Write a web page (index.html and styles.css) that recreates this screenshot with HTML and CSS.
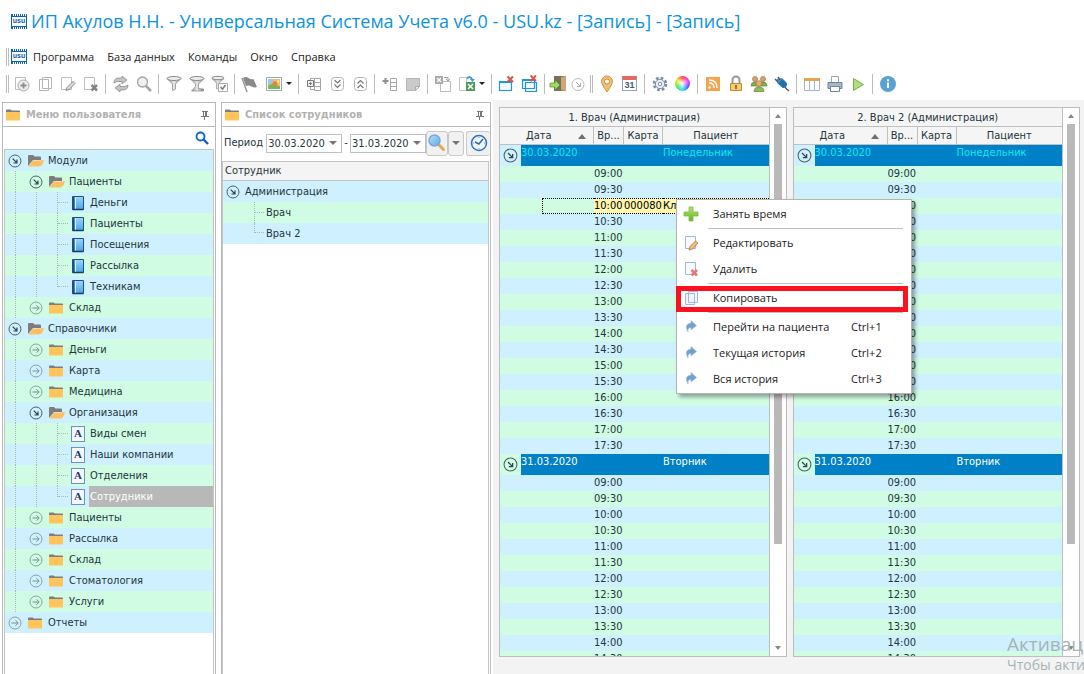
FILE: index.html
```html
<!DOCTYPE html>
<html lang="ru">
<head>
<meta charset="utf-8">
<title>ИП Акулов Н.Н. - Универсальная Система Учета</title>
<link rel="stylesheet" href="styles.css">
</head>
<body>
<svg class="defs" aria-hidden="true">
  <defs>
    <linearGradient id="g-blue" x1="0" y1="0" x2="1" y2="1"><stop offset="0" stop-color="#b4ddf7"/><stop offset="1" stop-color="#5faee8"/></linearGradient>
    <linearGradient id="g-book" x1="0" y1="0" x2="0" y2="1"><stop offset="0" stop-color="#9ad6fa"/><stop offset="1" stop-color="#4ba5e4"/></linearGradient>
    <linearGradient id="g-green" x1="0" y1="0" x2="0" y2="1"><stop offset="0" stop-color="#b5e36c"/><stop offset="1" stop-color="#64b428"/></linearGradient>
    <linearGradient id="g-gray" x1="0" y1="0" x2="1" y2="0"><stop offset="0" stop-color="#8c8c8c"/><stop offset=".5" stop-color="#e8e8e8"/><stop offset="1" stop-color="#808080"/></linearGradient>
  </defs>
  <symbol id="folder" viewBox="0 0 16 14"><path d="M1 4V2.500q0-1 1-1h3.500l1.500 1h7q1 0 1 1V5H1z" fill="#7d7d7d"/><path d="M1 4h14v8.500H1z" fill="#ffc55c"/></symbol>
  <symbol id="folder-open" viewBox="0 0 18 14"><path d="M1 12V2q0-1 1-1h4l1.500 1.500H13q1 0 1 1V6H6z" fill="#7d7d7d"/><path d="M1.500 12.500Q4 9 6 6.500 11 7 17 6q-1 5-4 6.500z" fill="#ffc063"/></symbol>
  <symbol id="open" viewBox="0 0 14 14"><circle cx="7" cy="7" r="6" fill="none" stroke="#4b6268"/><path d="M4.700 4.700l4.300 4.300M9 5.500V9H5.500" fill="none" stroke="#2f464c" stroke-width="1.200"/></symbol>
  <symbol id="closed" viewBox="0 0 14 14"><circle cx="7" cy="7" r="6" fill="none" stroke="#8aa3a2"/><path d="M3.500 7h6.500M7.500 4.300L10.200 7 7.500 9.700" fill="none" stroke="#78908f"/></symbol>
  <symbol id="book" viewBox="0 0 14 16"><path d="M1.500 1.500h11v13h-11z" fill="url(#g-book)" stroke="#1c5086"/><path d="M2 1.500h1.500v12.500H2z" fill="#1d4d85"/><path d="M4.500 2v12" stroke="#d8f0ff"/><path d="M1.500 14.500h11" stroke="#163e6b" stroke-width="1.500"/></symbol>
  <symbol id="pin" viewBox="0 0 10 10"><path d="M2 1.500h6M3.500 1.500v5M1 6.500h8M4.500 7v3" stroke="#777" fill="none"/><path d="M5 1h2v5H5z" fill="#777"/></symbol>
  <symbol id="search" viewBox="0 0 14 14"><circle cx="5.500" cy="5.500" r="4" fill="none" stroke="#0c63c7" stroke-width="1.800"/><path d="M8.500 8.500L13 13" stroke="#0c63c7" stroke-width="2.400"/></symbol>
  <symbol id="add" viewBox="0 0 18 18"><path d="M2.500 2.500h10v12h-10z" fill="#fff" stroke="#bdbdbd"/><circle cx="10.500" cy="10.500" r="5.500" fill="#ededed" stroke="#a6a6a6"/><path d="M10.500 7.500v6M7.500 10.500h6" stroke="#8f8f8f" stroke-width="1.800"/></symbol>
  <symbol id="copy" viewBox="0 0 18 18"><path d="M6.500 2.500h9v11h-9zM3.500 4.500h9v11h-9z" fill="#fff" stroke="#b5b5b5"/></symbol>
  <symbol id="edit" viewBox="0 0 18 18"><path d="M2.500 2.500h10v12h-10z" fill="#fff" stroke="#bdbdbd"/><path d="M7 15.500l1-3L14 6.500l2 2-6 6z" fill="#ddd" stroke="#888"/></symbol>
  <symbol id="del" viewBox="0 0 18 18"><path d="M2.500 2.500h10v12h-10z" fill="#fff" stroke="#bdbdbd"/><path d="M9.500 10l5.500 5.500M15 10l-5.500 5.500" stroke="#858585" stroke-width="2.500"/></symbol>
  <symbol id="refresh" viewBox="0 0 18 18"><path d="M2 8q0-5 5-5h3V1l5 4-5 4V6.500H7Q4 6.500 2 8zM16 10q0 5-5 5H8v2l-5-4 5-4v2.500h3q3 0 5-1.500z" fill="#c4c4c4" stroke="#8d8d8d" stroke-width=".8"/></symbol>
  <symbol id="find" viewBox="0 0 18 18"><circle cx="7.500" cy="7" r="5" fill="#efefef" stroke="#a3a3a3" stroke-width="1.300"/><path d="M11 11l5 5" stroke="#a3a3a3" stroke-width="2.500"/></symbol>
  <symbol id="funnel" viewBox="0 0 18 18"><path d="M2 3.500L7.500 9v6.500l3-1.500V9L16 3.500z" fill="url(#g-gray)" stroke="#888" stroke-width=".7"/><ellipse cx="9" cy="3.500" rx="7" ry="2" fill="#eee" stroke="#888"/></symbol>
  <symbol id="funnel-cut" viewBox="0 0 18 18"><path d="M2 3.500L7.500 9v2.500L3.500 16h12v-2l-5-.5V9L16 3.500z" fill="url(#g-gray)" stroke="#888" stroke-width=".7"/><ellipse cx="9" cy="3.500" rx="7" ry="2" fill="#eee" stroke="#888"/></symbol>
  <symbol id="funnel-ok" viewBox="0 0 18 18"><path d="M1 3.500L5.500 8v6l2.500-1V8l5-4.500z" fill="url(#g-gray)" stroke="#999" stroke-width=".7"/><ellipse cx="7" cy="3" rx="6" ry="1.700" fill="#eee" stroke="#888"/><path d="M7.500 8.500h9v8h-9z" fill="#fff" stroke="#aaa"/><path d="M9.500 12l2 2 3-4" stroke="#777" stroke-width="1.500" fill="none"/></symbol>
  <symbol id="flag" viewBox="0 0 18 18"><path d="M1 3l5 14" stroke="#999" stroke-width="1.500"/><path d="M2 3q3-2 5.500 0t5 1l3.500 8q-3 1-5.500-.5T5 11z" fill="#8a8a8a"/></symbol>
  <symbol id="picture" viewBox="0 0 18 18"><path d="M1.500 2.500h15v13h-15z" fill="#fff" stroke="#90aaca"/><path d="M3 4h12v10H3z" fill="#f5bd5c"/><path d="M3 4h5v4l-5 2z" fill="#9ccbe9"/><path d="M3 10.500l5-2 7 3V14H3z" fill="#7db64e"/><circle cx="10" cy="8.500" r="2.300" fill="#ee7a48"/><circle cx="13" cy="6.500" r="1.200" fill="#ffe99b"/></symbol>
  <symbol id="tree-rows" viewBox="0 0 18 18"><path d="M9.500 3.500h6v12h-6zM9.500 7.500h6M9.500 11.500h6M9 3.500H5.500v2M5.500 12v2.500H9" fill="none" stroke="#a5a5a5"/><path d="M2.500 5.500h6v6h-6zM5.500 7v3M4 8.500h3" fill="#eee" stroke="#777"/></symbol>
  <symbol id="down2" viewBox="0 0 18 18"><rect x="3.500" y="2.500" width="12" height="13" rx="3" fill="#fff" stroke="#b5b5b5"/><path d="M6.500 5l3 3 3-3M6.500 9.500l3 3 3-3" fill="none" stroke="#777" stroke-width="1.200"/></symbol>
  <symbol id="up2" viewBox="0 0 18 18"><rect x="3.500" y="2.500" width="12" height="13" rx="3" fill="#fff" stroke="#b5b5b5"/><path d="M6.500 8.500l3-3 3 3M6.500 13l3-3 3 3" fill="none" stroke="#777" stroke-width="1.200"/></symbol>
  <symbol id="row-add" viewBox="0 0 18 18"><path d="M9.500 3.500h6v12h-6zM9.500 7.500h6M9.500 11.500h6" fill="none" stroke="#aaa"/><path d="M4.500 3v6M1.500 6h6" stroke="#909090" stroke-width="2"/></symbol>
  <symbol id="note" viewBox="0 0 18 18"><path d="M2.500 3.500h13v8l-4 4h-9z" fill="#cacaca" stroke="#b5b5b5"/><path d="M15.500 11.500h-4v4z" fill="#eee" stroke="#aaa"/></symbol>
  <symbol id="export" viewBox="0 0 18 18"><path d="M6.500 6.500h10v10h-10z" fill="#fff" stroke="#bbb"/><path d="M1 1h8v8H1z" fill="#a8a8a8"/><path d="M3 3l4 4M7 3L3 7" stroke="#fff" stroke-width="1.300"/><path d="M10 2.500h4V5M12 4l2 2 2-2" stroke="#a0a0a0" fill="none"/></symbol>
  <symbol id="export-x" viewBox="0 0 18 18"><path d="M1.500 2.500h7v13h-7z" fill="#fff" stroke="#c5c5c5"/><path d="M8 7h9v9H8z" fill="#479e5b"/><path d="M10 9l5 5M15 9l-5 5" stroke="#fff" stroke-width="1.600"/><path d="M9 3.500q3-3 5 .5" stroke="#3999cc" stroke-width="2" fill="none"/><path d="M12 4h5l-2.500 3z" fill="#3999cc"/></symbol>
  <symbol id="win-x" viewBox="0 0 18 18"><path d="M1.500 6.500h12v9h-12z" fill="#eff9ff" stroke="#2196d5" stroke-width="1.200"/><path d="M1.500 7h12" stroke="#2196d5" stroke-width="2"/><path d="M9.500 1.500L15 7M15 1.500L9.500 7" stroke="#df5140" stroke-width="2"/></symbol>
  <symbol id="wins-x" viewBox="0 0 18 18"><path d="M4.500 7.500h11v9h-11zM1.500 4.500h12v9h-12z" fill="#eff9ff" stroke="#2196d5" stroke-width="1.200"/><path d="M1.500 5h12" stroke="#2196d5" stroke-width="2"/><path d="M9.500.5L15 6M15 .5L9.500 6" stroke="#df5140" stroke-width="2"/></symbol>
  <symbol id="exit" viewBox="0 0 18 18"><path d="M5 1h12v15H5z" fill="#77705f"/><path d="M12 2l5-1v15l-5-1z" fill="#cfa873"/><path d="M1 8h5V5l5 5-5 5v-3H1z" fill="#a0dc60" stroke="#53921f" stroke-width=".7"/></symbol>
  <symbol id="circle-dn" viewBox="0 0 18 18"><circle cx="9" cy="9.500" r="6" fill="#fff" stroke="#bbb"/><path d="M7 7l4 4M11.500 8v3.500H8" stroke="#aaa" fill="none"/></symbol>
  <symbol id="marker" viewBox="0 0 18 18"><path d="M9 17Q3.500 9 3.500 6.500a5.500 5.500 0 0111 0Q14.500 9 9 17z" fill="#f1c06f" stroke="#c79250"/><circle cx="9" cy="6.500" r="2.500" fill="#fff" stroke="#c88d42"/></symbol>
  <symbol id="gear" viewBox="0 0 18 18"><circle cx="9" cy="9" r="6" fill="none" stroke="#7b8da3" stroke-width="2.600" stroke-dasharray="2.700 2"/><circle cx="9" cy="9" r="4.600" fill="#eef2f7" stroke="#7b8da3"/><circle cx="9" cy="9" r="1.800" fill="#fff" stroke="#7b8da3"/></symbol>
  <symbol id="rss" viewBox="0 0 18 18"><path d="M2 2h14v14H2z" fill="#f4a54b"/><circle cx="5.500" cy="12.500" r="1.300" fill="#fff"/><path d="M5 8q5 0 5 5M5 5q8 0 8 8" fill="none" stroke="#fff" stroke-width="1.500"/></symbol>
  <symbol id="lock" viewBox="0 0 18 18"><path d="M5.500 8V5a3.500 3.500 0 017 0v3" fill="none" stroke="#999" stroke-width="2"/><path d="M3.500 8.500h11v7h-11z" fill="#f8cd70" stroke="#bb8b38"/><path d="M9 10v4" stroke="#76572b" stroke-width="1.500"/></symbol>
  <symbol id="people" viewBox="0 0 18 18"><g fill="#dda06e" stroke="#a76c3d" stroke-width=".7"><circle cx="5" cy="4" r="2.500"/><circle cx="13" cy="4" r="2.500"/></g><path d="M1 11q0-4 4-4 3 0 4 2 1-2 4-2 4 0 4 4z" fill="#82ad4c" stroke="#5e8831" stroke-width=".7"/><circle cx="9" cy="8.500" r="2.800" fill="#e6ae7d" stroke="#a76c3d" stroke-width=".7"/><path d="M4 16.500q0-4.500 5-4.500t5 4.500z" fill="#8fbc59" stroke="#5e8831" stroke-width=".7"/></symbol>
  <symbol id="plug" viewBox="0 0 18 18"><path d="M4 4l5-1 5 5-1 4-3 1-6-5z" fill="#3c96d5"/><path d="M5 8.500L9.500 4l4.500 5-1 3-3 1z" fill="#246fa9"/><path d="M2 4l3 3M5 2l2 3M12 12q1 2 4 4" stroke="#555" stroke-width="1.500" fill="none"/></symbol>
  <symbol id="grid" viewBox="0 0 18 18"><path d="M1.500 3.500h15v12h-15zM6.500 4v11M11.500 4v11" fill="#fff" stroke="#9fb6d4"/><path d="M1 3h16v3H1z" fill="#e7a451"/></symbol>
  <symbol id="printer" viewBox="0 0 18 18"><path d="M5.500 1.500h7v7h-7z" fill="#fff" stroke="#9aaabd"/><path d="M2 7.500h14v6H2z" fill="#a7b6c9" stroke="#6f829c"/><path d="M4.500 11.500h9v5h-9z" fill="#fff" stroke="#6f829c"/></symbol>
  <symbol id="play" viewBox="0 0 18 18"><path d="M4.500 3.500l10 6-10 6z" fill="#b2dd86" stroke="#78ad45"/></symbol>
  <symbol id="info" viewBox="0 0 18 18"><circle cx="9" cy="9" r="8" fill="#5aa2d4"/><path d="M9 7.500V13M9 4.200v2" stroke="#fff" stroke-width="2"/></symbol>
  <symbol id="find-color" viewBox="0 0 20 20"><path d="M11 11l5.500 5.500" stroke="#e4a955" stroke-width="3" stroke-linecap="round"/><circle cx="7.500" cy="7.500" r="5.500" fill="url(#g-blue)" stroke="#7ba7d8" stroke-width="1.500"/></symbol>
  <symbol id="clock" viewBox="0 0 20 20"><circle cx="10" cy="10" r="7.500" fill="#edf6fd" stroke="#2c73be" stroke-width="1.500"/><path d="M9.500 11.500L14 6M10 11L6 9" stroke="#39679c" stroke-width="1.500"/><path d="M10 4v1M10 15v1M4 10h1M15 10h1" stroke="#7b96b3"/></symbol>
  <symbol id="plus" viewBox="0 0 18 18"><path d="M7 2h4v5h5v4h-5v5H7v-5H2V7h5z" fill="url(#g-green)" stroke="#7fbc43" stroke-width=".8"/></symbol>
  <symbol id="m-edit" viewBox="0 0 18 18"><path d="M3.500 2.500h10v12h-10z" fill="#f7faff" stroke="#a3b7dc"/><path d="M7 16l1-3.500L13.500 7l2.500 2-5.500 6z" fill="#f0bd78" stroke="#ae7242" stroke-width=".8"/></symbol>
  <symbol id="m-del" viewBox="0 0 18 18"><path d="M3.500 2.500h10v12h-10z" fill="#f7faff" stroke="#a3b7dc"/><path d="M9.500 10l5.500 5.500M15 10l-5.500 5.500" stroke="#e87878" stroke-width="2.600"/></symbol>
  <symbol id="m-copy" viewBox="0 0 18 18"><path d="M6.500 2.500h9v11h-9zM3.500 4.500h9v11h-9z" fill="#f1f5fd" stroke="#a3b7dc"/></symbol>
  <symbol id="m-go" viewBox="0 0 18 18"><path d="M6 14Q1.500 6 9 5V2.500l5.500 5L9 12V9.500Q5.500 9.500 6 14z" fill="#719fce" stroke="#9dbedf" stroke-width=".7"/></symbol>
</svg>

<header class="titlebar"><i class="logo">usu</i><h1>ИП Акулов Н.Н. - Универсальная Система Учета v6.0 - USU.kz - [Запись] - [Запись]</h1></header>

<nav class="menubar"><i class="grip"></i><i class="logo">usu</i>
  <button>Программа</button><button>База данных</button><button>Команды</button><button>Окно</button><button>Справка</button>
</nav>

<div class="toolbar" role="toolbar">
  <i class="grip"></i>
  <button aria-label="Добавить"><svg><use href="#add"/></svg></button>
  <button aria-label="Копировать"><svg><use href="#copy"/></svg></button>
  <button aria-label="Редактировать"><svg><use href="#edit"/></svg></button>
  <button aria-label="Удалить"><svg><use href="#del"/></svg></button>
  <i class="sep"></i>
  <button aria-label="Обновить"><svg><use href="#refresh"/></svg></button>
  <button aria-label="Поиск"><svg><use href="#find"/></svg></button>
  <i class="sep"></i>
  <button aria-label="Фильтр"><svg><use href="#funnel"/></svg></button>
  <button aria-label="Снять фильтр"><svg><use href="#funnel-cut"/></svg></button>
  <button aria-label="Выбор фильтра"><svg><use href="#funnel-ok"/></svg></button>
  <i class="sep"></i>
  <button aria-label="Флаг"><svg><use href="#flag"/></svg></button>
  <button class="drop" aria-label="Картинка"><svg><use href="#picture"/></svg><i class="caret dark"></i></button>
  <i class="sep"></i>
  <button aria-label="Группы"><svg><use href="#tree-rows"/></svg></button>
  <button aria-label="Развернуть"><svg><use href="#down2"/></svg></button>
  <button aria-label="Свернуть"><svg><use href="#up2"/></svg></button>
  <i class="sep"></i>
  <button aria-label="Добавить строку"><svg><use href="#row-add"/></svg></button>
  <button aria-label="Заметка"><svg><use href="#note"/></svg></button>
  <i class="sep"></i>
  <button aria-label="Импорт"><svg><use href="#export"/></svg></button>
  <button class="drop" aria-label="Экспорт"><svg><use href="#export-x"/></svg><i class="caret dark"></i></button>
  <i class="sep"></i>
  <button aria-label="Закрыть окно"><svg><use href="#win-x"/></svg></button>
  <button aria-label="Закрыть все окна"><svg><use href="#wins-x"/></svg></button>
  <i class="sep"></i>
  <button class="narrow" aria-label="Выход"><svg><use href="#exit"/></svg></button>
  <button class="narrow" aria-label="Ещё"><svg><use href="#circle-dn"/></svg></button>
  <i class="grip second"></i>
  <button aria-label="Карта"><svg><use href="#marker"/></svg></button>
  <button aria-label="Календарь"><i class="calendar">31</i></button>
  <i class="sep"></i>
  <button aria-label="Настройки"><svg><use href="#gear"/></svg></button>
  <button aria-label="Цвета"><i class="wheel"></i></button>
  <i class="sep"></i>
  <button aria-label="Новости"><svg><use href="#rss"/></svg></button>
  <button aria-label="Блокировка"><svg><use href="#lock"/></svg></button>
  <button aria-label="Пользователи"><svg><use href="#people"/></svg></button>
  <button aria-label="Подключение"><svg><use href="#plug"/></svg></button>
  <i class="sep"></i>
  <button aria-label="Таблица"><svg><use href="#grid"/></svg></button>
  <button aria-label="Печать"><svg><use href="#printer"/></svg></button>
  <button aria-label="Запуск"><svg><use href="#play"/></svg></button>
  <i class="sep"></i>
  <button aria-label="Информация"><svg><use href="#info"/></svg></button>
</div>

<main class="workspace">
  <section class="panel user-menu">
    <h2><svg class="folder"><use href="#folder"/></svg><span>Меню пользователя</span><svg class="pin"><use href="#pin"/></svg></h2>
    <div class="find"><button aria-label="Найти"><svg><use href="#search"/></svg></button></div>
    <ul class="tree striped" id="tree"></ul>
  </section>

  <section class="panel staff">
    <h2><svg class="folder"><use href="#folder"/></svg><span>Список сотрудников</span><svg class="pin"><use href="#pin"/></svg></h2>
    <div class="period">
      <label for="from">Период</label>
      <span class="combo"><input id="from" value="30.03.2020"><i class="caret"></i></span>
      <span class="dash">-</span>
      <span class="combo"><input aria-label="По дату" value="31.03.2020"><i class="caret"></i></span>
      <button class="tool" aria-label="Искать"><svg><use href="#find-color"/></svg></button>
      <button class="tool slim" aria-label="Варианты"><i class="caret"></i></button>
      <button class="tool last" aria-label="Время"><svg><use href="#clock"/></svg></button>
    </div>
    <div class="staff-list">
      <div class="col-head">Сотрудник</div>
      <ul class="tree striped">
        <li class="level0"><svg class="knob"><use href="#open"/></svg><span>Администрация</span></li>
        <li class="leaf"><i class="elbow"></i><span>Врач</span></li>
        <li class="leaf end"><i class="elbow"></i><span>Врач 2</span></li>
      </ul>
    </div>
  </section>

  <div class="schedules" id="schedules"></div>
</main>

<div class="context-menu" role="menu">
  <button role="menuitem"><svg><use href="#plus"/></svg><span>Занять время</span></button>
  <hr>
  <button role="menuitem"><svg><use href="#m-edit"/></svg><span>Редактировать</span></button>
  <button role="menuitem"><svg><use href="#m-del"/></svg><span>Удалить</span></button>
  <hr>
  <button role="menuitem" class="marked"><svg><use href="#m-copy"/></svg><span>Копировать</span></button>
  <hr>
  <button role="menuitem"><svg><use href="#m-go"/></svg><span>Перейти на пациента</span><kbd>Ctrl+1</kbd></button>
  <button role="menuitem"><svg><use href="#m-go"/></svg><span>Текущая история</span><kbd>Ctrl+2</kbd></button>
  <button role="menuitem"><svg><use href="#m-go"/></svg><span>Вся история</span><kbd>Ctrl+3</kbd></button>
</div>

<div class="watermark"><p class="big">Активац</p><p>Чтобы акти</p></div>
<script src="app.js"></script>
</body>
</html>
```

FILE: styles.css
```css
* { box-sizing: border-box; }
body {
  margin: 0; height: 100vh; overflow: hidden; position: relative;
  display: flex; flex-direction: column;
  background: #fff; color: #24363c;
  font: 11px/16px "DejaVu Sans Condensed", "Noto Sans", sans-serif;
}
button { border: 0; padding: 0; background: none; color: inherit; font: inherit; }
h1, h2, p, ul { margin: 0; padding: 0; font-weight: normal; }
ul { list-style: none; }
.defs { position: absolute; width: 0; height: 0; }

.logo {
  width: 16px; height: 15px; flex: none; border: solid #0a66b0; border-width: 0 1px;
  background:
    repeating-linear-gradient(90deg, #0a66b0 0 1px, #fff 1px 2px) top / 100% 2px no-repeat,
    repeating-linear-gradient(90deg, #0a66b0 0 1px, #fff 1px 2px) bottom / 100% 2px no-repeat,
    linear-gradient(#0a66b0, #0a66b0) 0 2px / 100% 1px no-repeat,
    linear-gradient(#0a66b0, #0a66b0) 0 12px / 100% 1px no-repeat, #fff;
  color: #0a5aa5; font: bold 7px/14px "Liberation Sans", sans-serif; text-align: center;
}
.titlebar { height: 42px; padding: 0 11px; display: flex; align-items: center; gap: 4px; flex: none; }
.titlebar h1 { font: 18px/24px "Open Sans", "Noto Sans", sans-serif; color: #0c93dc; white-space: nowrap; }
.menubar {
  height: 29px; flex: none; display: flex; align-items: center; gap: 13px; padding-left: 6px;
  font: 11px/16px "Open Sans", "Noto Sans", sans-serif; color: #222;
}
.menubar .logo { margin: 0 -7px 0 -11px; }
.grip { width: 3px; height: 18px; flex: none; border: solid #bcbcbc; border-width: 0 1px; }

.toolbar { height: 25px; margin-bottom: 4px; flex: none; display: flex; align-items: center; padding-left: 6px; }
.toolbar .grip { margin-right: 1px; }
.toolbar .grip.second { margin: 0 2px; }
.toolbar button { width: 23px; height: 22px; display: flex; align-items: center; justify-content: center; flex: none; }
.toolbar svg { width: 18px; height: 18px; flex: none; }
.toolbar .drop { width: 34px; gap: 3px; }
.toolbar .narrow { width: 20px; }
.sep { width: 1px; height: 20px; margin: 0 3px; background: #bcbcbc; flex: none; }
.wheel {
  width: 15px; height: 15px; border-radius: 50%;
  background: radial-gradient(#fff, transparent 60%), conic-gradient(#f44, #f3f, #55f, #3df, #4e4, #ee4, #f44);
}
.calendar {
  width: 15px; height: 15px; border: 1px solid #8da5c3; border-top: 4px solid #e8685e; background: #fff;
  color: #44597a; font: bold 9px/10px "Liberation Sans", sans-serif; text-align: center;
}
.caret { border: solid transparent; border-width: 4px 4px 0; border-top-color: #777; flex: none; }
.caret.dark { border-width: 3px 3px 0; border-top-color: #222; }

.workspace { flex: 1; min-height: 0; display: flex; gap: 5px; padding-left: 2px; }
.panel { border: solid #b9b9b9; border-width: 1px 1px 0; margin-top: 2px; display: flex; flex-direction: column; flex: none; }
.user-menu { width: 214px; }
.staff { width: 270px; }
.panel h2 {
  height: 24px; flex: none; border-bottom: 1px solid #b9b9b9; padding: 0 5px 0 2px;
  display: flex; align-items: center; gap: 5px;
  font: bold 11px/16px "DejaVu Sans Condensed", "DejaVu Sans", sans-serif; color: #b2b2b2;
}
.panel h2 span { flex: 1; white-space: nowrap; }
.folder { width: 16px; height: 14px; flex: none; }
.pin { width: 10px; height: 10px; flex: none; }
.find { height: 22px; flex: none; display: flex; justify-content: flex-end; align-items: center; padding-right: 6px; }
.find button, .find svg { width: 14px; height: 14px; display: block; }

.user-menu .tree { flex: 1; margin: 0 1px; border: 1px solid #c4c4c4; border-bottom: 0; }
.tree li { height: 21px; display: flex; align-items: center; gap: 5px; position: relative; white-space: nowrap; }
.striped li:nth-child(odd) { background: #cff0ff; }
.striped li:nth-child(even) { background: #cffce3; }
.knob { width: 14px; height: 14px; flex: none; }
.tree .folder-open { width: 18px; height: 14px; margin-right: -2px; flex: none; }
.tree .file { width: 14px; height: 16px; flex: none; }
.letter {
  border: 1px solid #6b92c4; background: #f5f9ff; color: #1d3a6b;
  font: bold 11px/13px "Liberation Serif", serif; text-align: center;
}
.level0 { padding-left: 3px; }
.level1 { padding-left: 24px; }
.level2 { padding-left: 66px; }
.level2 span { flex: 1; height: 21px; padding-left: 1px; line-height: 21px; margin-left: -1px; }
.level2.current span { background: #b8b8b8; color: #fff; }
.rail { position: absolute; top: 0; bottom: 0; border-left: 1px dotted #a5bdb9; }
.rail-a { left: 10px; }
.rail-b { left: 31px; }
.rail-c { left: 52px; width: 11px; }
.rail-c::after { content: ""; position: absolute; left: 0; right: 0; top: 10px; border-top: 1px dotted #a5bdb9; }
.end .rail-c { bottom: 10px; }
.level0 .rail-a, .level1 .rail-b { display: none; }

.period { height: 34px; flex: none; display: flex; align-items: center; padding: 0 0 2px 2px; }
.period label { width: 43px; }
.combo { width: 76px; height: 19px; border: 1px solid #c0c0c0; display: flex; align-items: center; padding-right: 4px; }
.combo input { flex: 1; min-width: 0; height: 17px; border: 0; padding: 0 0 0 1px; background: none; color: inherit; font: inherit; }
.dash { width: 8px; text-align: center; }
.tool { width: 22px; height: 25px; border: 1px solid #c8c8c8; border-radius: 3px; background: #f1f1f1; display: flex; align-items: center; justify-content: center; flex: none; }
.tool svg { width: 20px; height: 20px; flex: none; }
.tool.slim { width: 16px; }
.tool.last { margin-left: 2px; width: 24px; border-right: 0; }
.staff-list { flex: 1; margin: 0 1px 0 0; border: solid #c4c4c4; border-width: 1px 1px 0; }
.col-head { height: 19px; padding: 1px 2px; border-bottom: 1px solid #c4c4c4; background: #f4f4f4; }
.staff-list .leaf { padding-left: 43px; }
.elbow { position: absolute; left: 31px; top: 0; width: 10px; height: 21px; border-left: 1px dotted #a5bdb9; }
.elbow::after { content: ""; position: absolute; left: 0; right: 0; top: 10px; border-top: 1px dotted #a5bdb9; }
.end .elbow { height: 10px; }
.end .elbow::after { top: 9px; }

.schedules { flex: 1; min-width: 0; display: flex; gap: 6px; padding: 7px 4px 17px 6px; margin-left: -3px; background: #f3f3f3; }
.schedule { flex: 1; min-width: 0; display: flex; border: 1px solid #bdbdbd; background: #fff; }
.sheet { flex: 1; min-width: 0; overflow: hidden; border-right: 1px solid #bdbdbd; }
.sheet table { width: 100%; border-collapse: separate; border-spacing: 0; table-layout: fixed; }
.sheet th, .sheet td { padding: 0; font-weight: normal; white-space: nowrap; overflow: hidden; }
.sheet th { height: 18px; background: #f5f5f5; border: solid #c0c0c0; border-width: 0 1px 1px 0; }
.sheet .title { height: 19px; padding-top: 1px; }
.sheet th:last-child { border-right: 0; }
.c-knob { width: 21px; }
.c-indent { width: 21px; }
.c-date { width: 52px; }
.c-time { width: 30px; }
.c-card { width: 39px; }
.sheet .date-head { padding-left: 26px; text-align: left; }
.date-head i { display: inline-block; margin-left: 26px; border: solid transparent; border-width: 0 4px 5px; border-bottom-color: #6f6f6f; }
.sheet td { height: 16px; line-height: 16px; }
.sheet tbody tr.odd { background: #cff0ff; }
.sheet tbody tr.even { background: #cffce3; }
.sheet .day td { height: 21px; vertical-align: top; background: #0080c6; color: #fff; }
.sheet .day .toggle { background: none; vertical-align: middle; padding: 0 0 0 3px; }
.sheet .day.active td { color: #0fe9f2; }
.toggle svg { display: block; width: 15px; height: 15px; }
.sheet .busy td { color: #000; }
.busy .fill { background: #fff6b0; }
.busy .edge { border: dotted #000; border-width: 1px 0; line-height: 14px; }
.busy .edge.first { border-left-width: 1px; }
.scroll { width: 16px; flex: none; display: flex; flex-direction: column; align-items: center; padding: 6px 0; background: #fff; }
.scroll .up { border: solid transparent; border-width: 0 3px 4px; border-bottom-color: #888; }
.scroll .thumb { width: 8px; height: 420px; margin: 6px 0 auto; background: #b9b9b9; }
.scroll .down { border: solid transparent; border-width: 4px 3px 0; border-top-color: #888; }

.context-menu {
  position: absolute; left: 676px; top: 199px; width: 236px; padding: 1px 0;
  border: 1px solid #b4b4b4; background: #fff; box-shadow: 3px 3px 4px rgba(0, 0, 0, .35);
  font: 11px/16px "Open Sans", "Noto Sans", sans-serif; color: #222;
}
.context-menu button { width: 100%; height: 26px; padding-left: 5px; display: flex; align-items: center; gap: 13px; position: relative; white-space: nowrap; }
.context-menu svg { width: 18px; height: 18px; flex: none; }
.context-menu span { flex: 1; text-align: left; }
.context-menu kbd { width: 60px; font: inherit; text-align: left; }
.context-menu hr { height: 1px; margin: 1px 8px 1px 31px; border: 0; background: #bebebe; }
.context-menu .marked::after { content: ""; position: absolute; inset: 1px 3px -1px -1px; border: 5px solid #fc111f; }

.watermark { position: absolute; right: 0; bottom: 0; width: 77px; height: 42px; overflow: hidden; white-space: nowrap; color: #a8b3b3; font: 14px/18px "Open Sans", "Noto Sans", sans-serif; }
.watermark .big { font-size: 19px; line-height: 24px; }
```

FILE: app.js
```js
const icon = (name, cls) => `<svg class="${cls}"><use href="#${name}"/></svg>`;

const nodes = [
  [0, "open", "Модули"], [1, "open", "Пациенты"],
  [2, "book", "Деньги"], [2, "book", "Пациенты"], [2, "book", "Посещения"], [2, "book", "Рассылка"], [2, "book", "Техникам", "end"],
  [1, "closed", "Склад"], [0, "open", "Справочники"],
  [1, "closed", "Деньги"], [1, "closed", "Карта"], [1, "closed", "Медицина"], [1, "open", "Организация"],
  [2, "letter", "Виды смен"], [2, "letter", "Наши компании"], [2, "letter", "Отделения"], [2, "letter", "Сотрудники", "end current"],
  [1, "closed", "Пациенты"], [1, "closed", "Рассылка"], [1, "closed", "Склад"], [1, "closed", "Стоматология"], [1, "closed", "Услуги"],
  [0, "closed", "Отчеты"],
];

function nodeIcons(level, kind) {
  if (kind === "letter") return `<i class="file letter">A</i>`;
  if (level === 2) return icon(kind, "file");
  const folder = kind === "open" ? "folder-open" : "folder";
  return icon(kind, "knob") + icon(folder, folder);
}

document.getElementById("tree").innerHTML = nodes.map(([level, kind, text, extra = ""]) => {
  const rails = ["a", "b", "c"].slice(0, level + 1).map(r => `<i class="rail rail-${r}"></i>`).join("");
  return `<li class="level${level} ${extra}">${rails}${nodeIcons(level, kind)}<span>${text}</span></li>`;
}).join("");

const times = [];
for (let h = 9; h < 18; h++) for (const m of ["00", "30"]) times.push(`${String(h).padStart(2, "0")}:${m}`);

function schedule(title, booking) {
  let n = 0;
  const stripe = () => (n++ % 2 ? "even" : "odd");
  const day = (date, name, active) =>
    `<tr class="day ${active} ${stripe()}"><td class="toggle">${icon("open", "")}</td><td colspan="3">${date}</td><td></td><td>${name}</td></tr>`;
  const free = time => `<tr class="${stripe()}"><td></td><td></td><td></td><td>${time}</td><td></td><td></td></tr>`;
  const busy = time => `<tr class="busy ${stripe()}"><td></td><td></td><td class="edge first"></td><td class="edge fill">${time}</td><td class="edge fill">${booking.card}</td><td class="edge fill">${booking.name}</td></tr>`;
  const rows = day("30.03.2020", "Понедельник", "active")
    + times.map(t => (booking && t === booking.time ? busy(t) : free(t))).join("")
    + day("31.03.2020", "Вторник", "")
    + times.slice(0, 12).map(free).join("");
  return `<section class="schedule"><div class="sheet"><table>
    <colgroup><col class="c-knob"><col class="c-indent"><col class="c-date"><col class="c-time"><col class="c-card"><col></colgroup>
    <thead><tr><th colspan="6" class="title">${title}</th></tr>
    <tr><th colspan="3" class="date-head">Дата<i></i></th><th>Вр...</th><th>Карта</th><th>Пациент</th></tr></thead>
    <tbody>${rows}</tbody></table></div>
    <div class="scroll"><i class="up"></i><i class="thumb"></i><i class="down"></i></div></section>`;
}

document.getElementById("schedules").innerHTML =
  schedule("1. Врач (Администрация)", { time: "10:00", card: "000080", name: "Кл" }) +
  schedule("2. Врач 2 (Администрация)");
```
